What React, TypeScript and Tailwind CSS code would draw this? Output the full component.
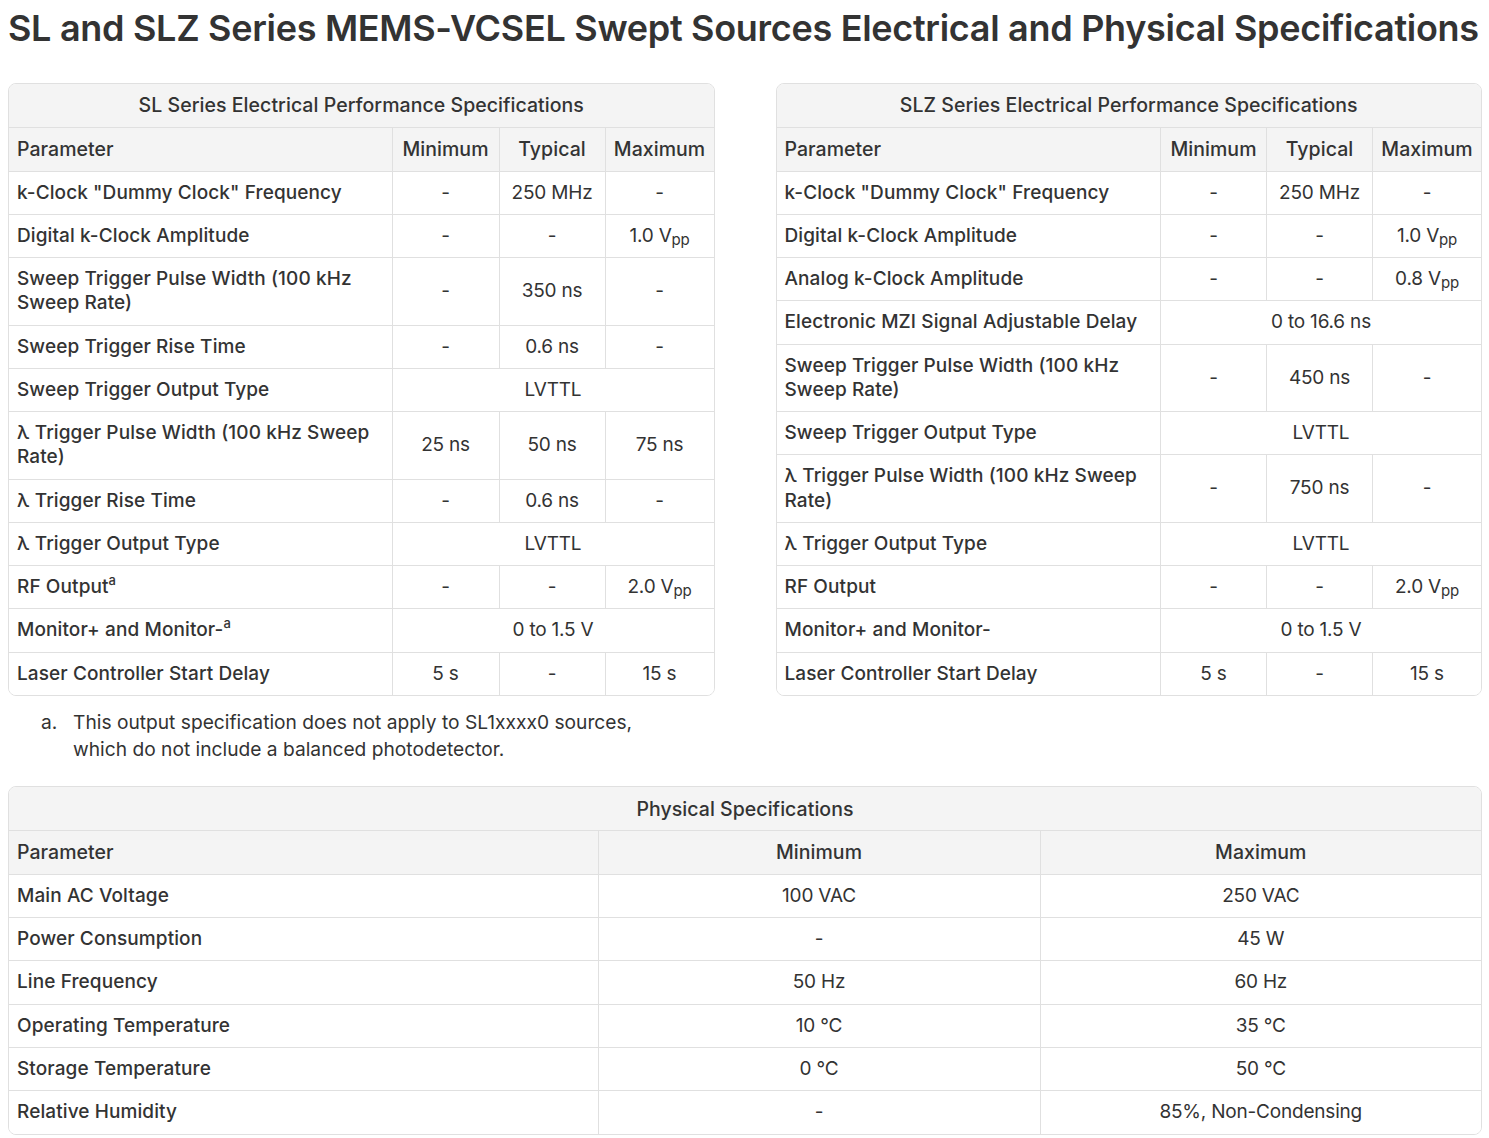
import React from "react";

type Cell = { v: React.ReactNode; span?: number };
type Row = { label: React.ReactNode; cells: Cell[] };

const Vpp = ({ n }: { n: string }) => (
  <span>
    {n} V<sub className="text-[15px] relative top-[3px] align-baseline leading-none">pp</sub>
  </span>
);
const Sup = () => <sup className="text-[13px] relative -top-[8px] leading-none">a</sup>;

const slRows: Row[] = [
  { label: 'k-Clock "Dummy Clock" Frequency', cells: [{ v: "-" }, { v: "250 MHz" }, { v: "-" }] },
  { label: "Digital k-Clock Amplitude", cells: [{ v: "-" }, { v: "-" }, { v: <Vpp n="1.0" /> }] },
  { label: "Sweep Trigger Pulse Width (100 kHz Sweep Rate)", cells: [{ v: "-" }, { v: "350 ns" }, { v: "-" }] },
  { label: "Sweep Trigger Rise Time", cells: [{ v: "-" }, { v: "0.6 ns" }, { v: "-" }] },
  { label: "Sweep Trigger Output Type", cells: [{ v: "LVTTL", span: 3 }] },
  { label: "λ Trigger Pulse Width (100 kHz Sweep Rate)", cells: [{ v: "25 ns" }, { v: "50 ns" }, { v: "75 ns" }] },
  { label: "λ Trigger Rise Time", cells: [{ v: "-" }, { v: "0.6 ns" }, { v: "-" }] },
  { label: "λ Trigger Output Type", cells: [{ v: "LVTTL", span: 3 }] },
  { label: <>RF Output<Sup /></>, cells: [{ v: "-" }, { v: "-" }, { v: <Vpp n="2.0" /> }] },
  { label: <>Monitor+ and Monitor-<Sup /></>, cells: [{ v: "0 to 1.5 V", span: 3 }] },
  { label: "Laser Controller Start Delay", cells: [{ v: "5 s" }, { v: "-" }, { v: "15 s" }] },
];

const slzRows: Row[] = [
  { label: 'k-Clock "Dummy Clock" Frequency', cells: [{ v: "-" }, { v: "250 MHz" }, { v: "-" }] },
  { label: "Digital k-Clock Amplitude", cells: [{ v: "-" }, { v: "-" }, { v: <Vpp n="1.0" /> }] },
  { label: "Analog k-Clock Amplitude", cells: [{ v: "-" }, { v: "-" }, { v: <Vpp n="0.8" /> }] },
  { label: "Electronic MZI Signal Adjustable Delay", cells: [{ v: "0 to 16.6 ns", span: 3 }] },
  { label: "Sweep Trigger Pulse Width (100 kHz Sweep Rate)", cells: [{ v: "-" }, { v: "450 ns" }, { v: "-" }] },
  { label: "Sweep Trigger Output Type", cells: [{ v: "LVTTL", span: 3 }] },
  { label: "λ Trigger Pulse Width (100 kHz Sweep Rate)", cells: [{ v: "-" }, { v: "750 ns" }, { v: "-" }] },
  { label: "λ Trigger Output Type", cells: [{ v: "LVTTL", span: 3 }] },
  { label: "RF Output", cells: [{ v: "-" }, { v: "-" }, { v: <Vpp n="2.0" /> }] },
  { label: "Monitor+ and Monitor-", cells: [{ v: "0 to 1.5 V", span: 3 }] },
  { label: "Laser Controller Start Delay", cells: [{ v: "5 s" }, { v: "-" }, { v: "15 s" }] },
];

const physRows: Row[] = [
  { label: "Main AC Voltage", cells: [{ v: "100 VAC" }, { v: "250 VAC" }] },
  { label: "Power Consumption", cells: [{ v: "-" }, { v: "45 W" }] },
  { label: "Line Frequency", cells: [{ v: "50 Hz" }, { v: "60 Hz" }] },
  { label: "Operating Temperature", cells: [{ v: "10 °C" }, { v: "35 °C" }] },
  { label: "Storage Temperature", cells: [{ v: "0 °C" }, { v: "50 °C" }] },
  { label: "Relative Humidity", cells: [{ v: "-" }, { v: "85%, Non-Condensing" }] },
];

function SpecTable({
  title,
  headers,
  widths,
  rows,
}: {
  title: string;
  headers: string[];
  widths: string[];
  rows: Row[];
}) {
  return (
    <div className="border border-[#e0e0e0] rounded-[8px] overflow-hidden">
      <table className="w-full table-fixed border-collapse">
        <colgroup>
          {widths.map((w, i) => (
            <col key={i} style={w ? { width: w } : undefined} />
          ))}
        </colgroup>
        <thead>
          <tr className="bg-[#f4f4f4]">
            <th
              colSpan={headers.length}
              className="h-[43px] py-[9px] px-2 text-center font-medium text-[19.5px] tracking-[0.05px] leading-[24px]"
            >
              {title}
            </th>
          </tr>
          <tr className="bg-[#f4f4f4]">
            {headers.map((h, i) => (
              <th
                key={i}
                className={`py-[9px] px-2 h-[44px] font-medium text-[19.5px] tracking-[0.05px] leading-[24px] border-t border-[#e0e0e0] ${
                  i === 0 ? "text-left" : "text-center border-l"
                }`}
              >
                {h}
              </th>
            ))}
          </tr>
        </thead>
        <tbody>
          {rows.map((r, ri) => (
            <tr key={ri} className="bg-white">
              <td className="py-[9px] px-2 h-[43.25px] text-left font-medium tracking-[0.1px] leading-[24.25px] border-t border-[#e0e0e0]">
                {r.label}
              </td>
              {r.cells.map((c, ci) => (
                <td
                  key={ci}
                  colSpan={c.span}
                  className="py-[9px] px-2 text-center font-normal tracking-[-0.2px] leading-[24.25px] border-t border-l border-[#e0e0e0]"
                >
                  {c.v}
                </td>
              ))}
            </tr>
          ))}
        </tbody>
      </table>
    </div>
  );
}

export default function App() {
  return (
    <div
      className="bg-white text-[#333333] pl-[8px] pr-[7px] pb-[4px]"
      style={{ fontFamily: "Inter, 'Noto Sans', sans-serif" }}
    >
      <h1 className="text-[36px] font-semibold leading-[46px] pt-[5px] tracking-[-0.3px] text-[#333333] whitespace-nowrap">
        SL and SLZ Series MEMS-VCSEL Swept Sources Electrical and Physical Specifications
      </h1>
      <div className="text-[19px]">
        <div className="grid grid-cols-2 gap-[61px] mt-[32px]">
          <SpecTable
            title="SL Series Electrical Performance Specifications"
            headers={["Parameter", "Minimum", "Typical", "Maximum"]}
            widths={["383px", "107px", "106px", ""]}
            rows={slRows}
          />
          <SpecTable
            title="SLZ Series Electrical Performance Specifications"
            headers={["Parameter", "Minimum", "Typical", "Maximum"]}
            widths={["384px", "106px", "106px", ""]}
            rows={slzRows}
          />
        </div>
        <div className="flex mt-[13px] pl-[33px] text-[19.2px] leading-[27px]">
          <span className="w-[32px] shrink-0">a.</span>
          <span className="w-[640px]">
            This output specification does not apply to SL1xxxx0 sources,
            <br />
            which do not include a balanced photodetector.
          </span>
        </div>
        <div className="mt-[23px]">
          <SpecTable
            title="Physical Specifications"
            headers={["Parameter", "Minimum", "Maximum"]}
            widths={["589px", "442px", ""]}
            rows={physRows}
          />
        </div>
      </div>
    </div>
  );
}
